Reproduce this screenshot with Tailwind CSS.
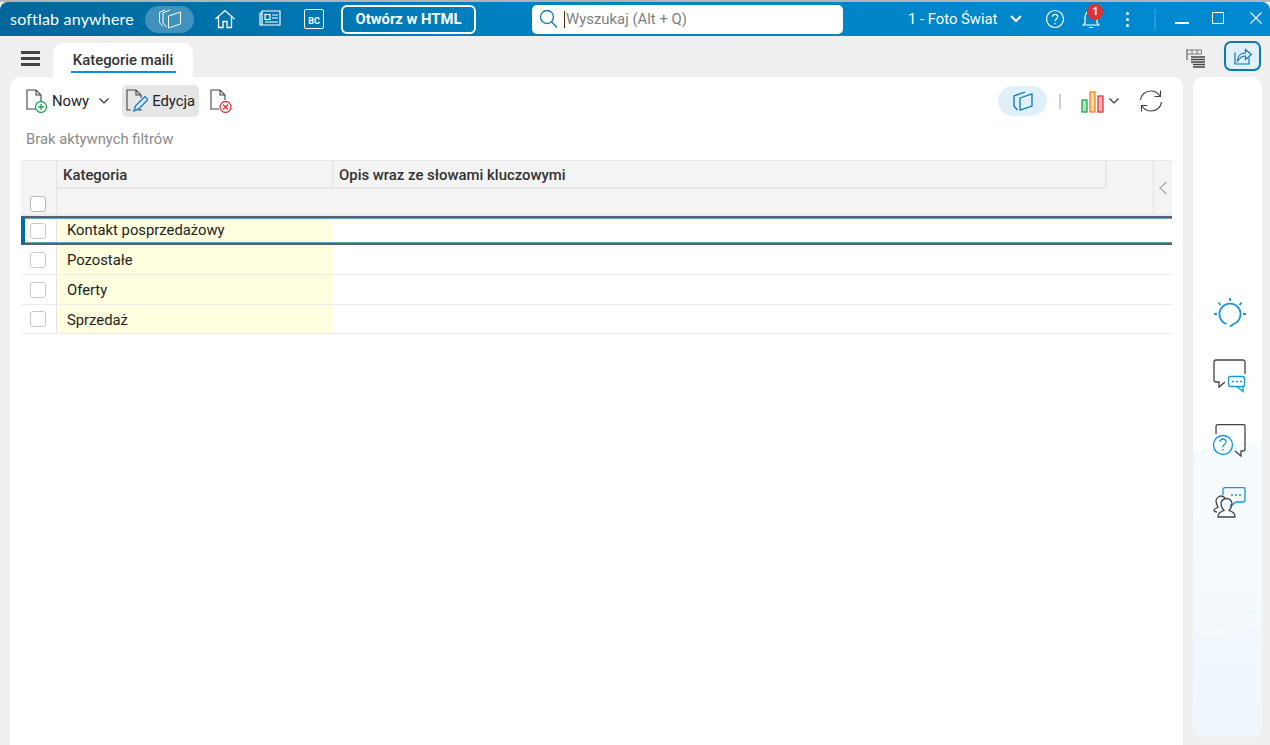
<!doctype html>
<html lang="pl"><head><meta charset="utf-8"><script src="https://cdn.jsdelivr.net/npm/@tailwindcss/browser@4"></script></head>
<body class="w-[1270px] h-[745px] overflow-hidden bg-[#efefef] font-[Roboto,sans-serif]">
<div class="flex flex-col h-[745px]">
  <div class="h-[2px] bg-[#b4b4b4]"></div>
  <header class="h-[34px] rounded-t-[8px] bg-gradient-to-r from-[#00669b] via-[#0080c0] via-40% to-[#008ad2] flex items-center text-white shrink-0">
    <span class="ml-[10px] w-[126px] text-[16px] leading-none font-[Lato,sans-serif] tracking-[0.2px] whitespace-nowrap">softlab anywhere</span>
    <div class="ml-[9px] w-[49px] h-[27px] rounded-full bg-white/25 flex items-center justify-center">
      <svg width="24" height="20" viewBox="0 0 24 20" fill="none" stroke="#fff" stroke-width="1"><path d="M7 1 1.500 3.500v10l3 3.500"/><path d="M12 1 5 4v10l3.500 4"/><path d="M10.500 7 22.500 3v12l-12 4z"/></svg>
    </div>
    <svg class="ml-[20px]" width="22" height="20" viewBox="0 0 22 20" fill="none" stroke="#fff" stroke-width="1.300"><path d="M1.500 10 11 1.500 20.500 10M4.500 8v10.500h4.500v-6h4v6h4.500V8"/></svg>
    <svg class="ml-[23px]" width="22" height="18" viewBox="0 0 22 18" fill="none" stroke="#fff" stroke-width="1.200"><path d="M1 3h2v12h18V1H3v2M3 15H1V3"/><rect x="6" y="4.500" width="5" height="5"/><path d="M13 5h6M13 8h6M6 12h13"/></svg>
    <div class="ml-[23px] w-[20px] h-[20px] border border-white rounded-[2px] flex items-end justify-center text-[9px] font-bold leading-[13px]">BC</div>
    <div class="ml-[17px] w-[135px] h-[29px] border-2 border-white rounded-[6px] flex items-center justify-center text-[14.8px] font-bold">Otwórz w HTML</div>
    <div class="ml-[56px] w-[311px] h-[29px] bg-white rounded-[5px] flex items-center text-[14.9px] text-[#808080]">
      <svg class="ml-[7px]" width="20" height="20" viewBox="0 0 20 20" fill="none" stroke="#0a78b4" stroke-width="1.300"><circle cx="8" cy="8" r="6.500"/><path d="m12.500 12.800 5.500 5.700"/></svg>
      <span class="ml-[5px] w-px h-[17px] bg-[#4a2a10]"></span><span class="ml-px">Wyszukaj (Alt + Q)</span>
    </div>
    <span class="ml-[65px] text-[14.8px] whitespace-nowrap">1 - Foto Świat</span>
    <svg class="ml-[13px]" width="12" height="8" viewBox="0 0 12 8" fill="none" stroke="#fff" stroke-width="2"><path d="m1 1 5 5 5-5"/></svg>
    <svg class="ml-[23px]" width="20" height="20" viewBox="0 0 20 20" fill="none" stroke="#fff" stroke-width="1.200"><circle cx="10" cy="10" r="8.500"/><path d="M7.500 7.800c0-3.300 5.200-3.300 5.200 0 0 2.200-2.700 2.200-2.700 4.500M10 14v1.200"/></svg>
    <div class="relative ml-[17px] w-[18px] h-[20px]">
      <svg width="18" height="20" viewBox="0 0 18 20" fill="none" stroke="#fff" stroke-width="1.200"><path d="M1 16h16l-2-2V8a6 6 0 0 0-12 0v6zM7 18.500h4"/></svg>
      <span class="absolute left-[5px] top-[-5px] w-[16px] h-[16px] rounded-full bg-[#dc3238] text-[11px] font-bold leading-[16px] text-center">1</span>
    </div>
    <div class="ml-[26px] w-[3px] flex flex-col gap-[3px]"><i class="size-[3px] bg-white rounded-full"></i><i class="size-[3px] bg-white rounded-full"></i><i class="size-[3px] bg-white rounded-full"></i></div>
    <span class="ml-[25px] w-[2px] h-[21px] bg-white/15"></span>
    <span class="ml-[19px] w-[14px] h-[2px] bg-white mt-[7px]"></span>
    <span class="ml-[23px] w-[12px] h-[12px] border border-white mb-[3px]"></span>
    <svg class="ml-[26px] mb-[3px]" width="12" height="12" viewBox="0 0 12 12" stroke="#fff" stroke-width="1.100"><path d="m.5.500 11 11M11.500.500l-11 11"/></svg>
  </header>
  <div class="h-[41px] shrink-0 flex items-end relative">
    <div class="ml-[21px] mb-[11px] w-[19px] flex flex-col gap-[3px]"><i class="h-[3px] bg-[#444]"></i><i class="h-[3px] bg-[#444]"></i><i class="h-[3px] bg-[#444]"></i></div>
    <div class="ml-[13px] w-[140px] h-[34px] bg-white rounded-t-[10px] flex flex-col items-center">
      <span class="text-[14.9px] font-medium text-[#333] mt-[8px] leading-[18px]">Kategorie maili</span>
      <span class="w-[105px] h-[2px] bg-[#0a8fdc] mt-[2px]"></span>
    </div>
    <svg class="absolute left-[1186px] top-[13px]" width="20" height="20" viewBox="0 0 20 20" fill="none" stroke="#444" stroke-width="1"><path d="M1 0v11"/><path d="M1.500 1h14v4H1.500M6 1v4M11 1v4" stroke="#777"/><path d="M5 8h14M5 10.500h14M5 13h14M7 15.500h12M7 18h12" stroke-width="1.300"/></svg>
    <div class="absolute left-[1224px] top-[5px] w-[37px] h-[30px] bg-[#e0f0fa] border-2 border-[#0a78b4] rounded-[7px] flex items-center justify-center">
      <svg width="20" height="20" viewBox="0 0 20 20" fill="none" stroke="#0a78b4" stroke-width="1.200"><path d="M2 6.500V18h14v-6"/><path d="M4.500 15c0-5 3-8 8-8V3.500l6 5-6 5V10c-4 0-6 2-8 5z"/></svg>
    </div>
  </div>
  <div class="flex-1 flex min-h-0">
    <main class="ml-[10px] w-[1173px] bg-white rounded-t-[10px] px-[11px] flex flex-col">
      <div class="h-[48px] shrink-0 flex items-center text-[14.8px] text-[#222]">
        <svg class="ml-[5px]" width="22" height="24" viewBox="0 0 22 24" fill="none" stroke="#444" stroke-width="1.100"><path d="M10 20H1V1h9l5 5v6M10 1v5h5"/><circle cx="15" cy="18" r="5.500" stroke="#18a84c" stroke-width="1.300"/><path d="M15 15v6M12 18h6" stroke="#18a84c" stroke-width="1.300"/></svg>
        <span class="ml-[4px]">Nowy</span>
        <svg class="ml-[10px]" width="10" height="6" viewBox="0 0 10 6" fill="none" stroke="#333" stroke-width="1.200"><path d="m.5.500 4.500 4.500L9.500.500"/></svg>
        <div class="ml-[13px] w-[77px] h-[32px] bg-[#e6e6e6] rounded-[5px] flex items-center">
          <svg class="ml-[4px]" width="22" height="24" viewBox="0 0 22 24" fill="none" stroke="#444" stroke-width="1.100"><path d="M5 21H1V1h9l5 5v3M10 1v5h5M15 20v1h-3"/><path d="M8 22l1.500-5L19 7.500l3 3L12.500 20z" stroke="#2288dd" stroke-width="1.500"/></svg>
          <span class="ml-[4px]">Edycja</span>
        </div>
        <svg class="ml-[11px]" width="22" height="24" viewBox="0 0 22 24" fill="none" stroke="#444" stroke-width="1.100"><path d="M9 20H1V1h9l5 5v5M10 1v5h5"/><circle cx="15.500" cy="18" r="5.500" stroke="#e8323c" stroke-width="1.300"/><path d="m13 15.500 5 5M18 15.500l-5 5" stroke="#e8323c" stroke-width="1.300"/></svg>
        <div class="ml-auto w-[49px] h-[30px] bg-[#e0f0fa] rounded-full flex items-center justify-center">
          <svg width="22" height="22" viewBox="0 0 22 22" fill="none" stroke="#0a78b4" stroke-width="1.300"><path d="M13 2 2 6v10l3.500 4"/><path d="M8 8l12-4v12L8 20z"/></svg>
        </div>
        <span class="ml-[12px] w-[2px] h-[15px] bg-[#d0d0d0]"></span>
        <svg class="ml-[20px]" width="23" height="23" viewBox="0 0 23 23" stroke-width="1.300"><rect x="1" y="10" width="5" height="12" fill="#b4e6c4" stroke="#18a84c"/><rect x="9" y="2" width="5" height="20" fill="#fcd9a4" stroke="#f08020"/><rect x="17" y="6" width="5" height="16" fill="#fcb4b4" stroke="#e8323c"/></svg>
        <svg class="ml-[5px]" width="10" height="6" viewBox="0 0 10 6" fill="none" stroke="#333" stroke-width="1.200"><path d="m.5.500 4.500 4.500L9.500.500"/></svg>
        <svg class="ml-[20px] mr-[9px]" width="24" height="24" viewBox="0 0 24 24" fill="none" stroke="#444" stroke-width="1.200"><path d="M1.500 11C2 5.500 6.500 2 12 2c4 0 7 2 9 5M21.500 1.500V7.500h-6M22.500 13c-.5 5.500-5 9-10.500 9-4 0-7-2-9-5M2.500 22.500V16.500h6"/></svg>
      </div>
      <div class="h-[35px] shrink-0 text-[14.8px] text-[#8a8a8a] leading-[28px] pl-[5px]">Brak aktywnych filtrów</div>
      <section class="text-[14.8px] text-[#222]">
        <div class="h-[56px] bg-[#f4f4f4] border-t border-b-2 border-t-[#e6e6e6] border-b-[#ebebeb] grid grid-cols-[36px_277px_773px_1fr_18px] grid-rows-[28px_1fr]">
          <div class="row-span-2 border-r border-[#e4e4e4] relative">
            <span class="absolute left-[9px] top-[35px] size-[16px] bg-white border border-[#b8b8b8] rounded-[3px]"></span>
          </div>
          <div class="border-r-2 border-b-2 border-[#e8e8e8] pl-[6px] leading-[28px] text-[14.9px] font-medium text-[#333]">Kategoria</div>
          <div class="border-r-2 border-b-2 border-[#e8e8e8] pl-[5px] leading-[28px] text-[14.9px] font-medium text-[#333]">Opis wraz ze słowami kluczowymi</div>
          <div class="row-span-2 border-r border-[#e4e4e4]"></div>
          <div class="row-span-2 flex items-center justify-center"><svg width="8" height="14" viewBox="0 0 8 14" fill="none" stroke="#aaa" stroke-width="1.300"><path d="M7.500 1 1 7l6.500 6"/></svg></div>
          <div class="col-start-2 col-span-2"></div>
        </div>
        <div class="h-[29px] border-y-2 border-[#5c6064] border-l-[4px] border-l-[#006ea8] grid grid-cols-[32px_276px_1fr] shadow-[inset_0_1px_0_#6f9fb8,inset_0_-1px_0_#6f9fb8]">
          <div class="my-px border-r border-[#e4e4e4] flex items-center"><span class="ml-[5px] size-[16px] border border-[#c8c8c8] rounded-[3px]"></span></div>
          <div class="my-px bg-[#ffffe0] pl-[10px] leading-[23px]">Kontakt posprzedażowy</div><div></div>
        </div>
        <div class="h-[30px] border-b border-[#ececec] grid grid-cols-[36px_276px_1fr]">
          <div class="border-r border-[#e4e4e4] flex items-center"><span class="ml-[9px] size-[16px] border border-[#c8c8c8] rounded-[3px]"></span></div>
          <div class="bg-[#ffffe0] pl-[10px] pt-px leading-[28px]">Pozostałe</div><div></div>
        </div>
        <div class="h-[30px] border-b border-[#ececec] grid grid-cols-[36px_276px_1fr]">
          <div class="border-r border-[#e4e4e4] flex items-center"><span class="ml-[9px] size-[16px] border border-[#c8c8c8] rounded-[3px]"></span></div>
          <div class="bg-[#ffffe0] pl-[10px] pt-px leading-[28px]">Oferty</div><div></div>
        </div>
        <div class="h-[29px] border-b border-[#ececec] grid grid-cols-[36px_276px_1fr]">
          <div class="border-r border-[#e4e4e4] flex items-center"><span class="ml-[9px] size-[16px] border border-[#c8c8c8] rounded-[3px]"></span></div>
          <div class="bg-[#ffffe0] pl-[10px] pt-[2px] leading-[26px]">Sprzedaż</div><div></div>
        </div>
      </section>
    </main>
    <aside class="ml-[10px] w-[69px] h-[660px] bg-white rounded-[10px] relative overflow-hidden flex flex-col items-start pl-[20px]">
      <svg class="absolute inset-0" width="69" height="660" viewBox="0 0 69 660">
        <defs><linearGradient id="g" x1="0" y1="0" x2="0" y2="1"><stop offset="0" stop-color="#f6fbfe"/><stop offset="1" stop-color="#eef6fc"/></linearGradient></defs>
        <path d="M0 375Q30 366 69 366V660H0z" fill="url(#g)"/>
        <path d="M0 380Q30 368 60 366" fill="none" stroke="#d8ecf8" stroke-dasharray="4 6"/>
        <path d="M2 559Q35 546 69 530" fill="none" stroke="#cfe6f6" stroke-dasharray="6 6"/>
        <path d="M0 385Q35 410 69 450V550Q30 560 0 560z" fill="#fff" fill-opacity=".2"/>
      </svg>
      <svg class="relative mt-[219px]" width="34" height="34" viewBox="0 0 34 34" fill="none" stroke="#1796dc" stroke-width="1.800"><path d="M13.500 28A10.500 10.500 0 1 1 20.500 28L17 30.500"/><path d="M17 2v3M5.500 6.500l2 2.500M28.500 6.500l-2 2.500M1 18h3M30 18h3"/></svg>
      <svg class="relative mt-[29px]" width="34" height="34" viewBox="0 0 34 34" fill="none" stroke-width="1.300"><path d="M32 15V3a2 2 0 0 0-2-2H3a2 2 0 0 0-2 2v18a2 2 0 0 0 2 2h3v5l6-5" stroke="#444"/><rect x="15.500" y="17.500" width="16" height="10" rx="2" stroke="#1796dc"/><path d="M24 27.500l6 5v-5M19 22.500h2M23 22.500h2M27 22.500h2" stroke="#1796dc"/></svg>
      <svg class="relative mt-[31px]" width="34" height="34" viewBox="0 0 34 34" fill="none" stroke-width="1.300"><path d="M3 10V2.500a2 2 0 0 1 2-2h25a2 2 0 0 1 2 2V25a2 2 0 0 1-2 2h-2v5l-6-5" stroke="#444"/><circle cx="10" cy="21" r="9.500" stroke="#1796dc"/><path d="M7 18c0-4 6-4 6 0 0 2-3 2-3 5M10 25v1.500" stroke="#1796dc"/></svg>
      <svg class="relative mt-[29px]" width="34" height="34" viewBox="0 0 34 34" fill="none" stroke-width="1.300"><path d="M10 8V2.500a2 2 0 0 1 2-2h18a2 2 0 0 1 2 2V13a2 2 0 0 1-2 2h-7l-5 4v-2" stroke="#1796dc"/><path d="M18 8h2M22 8h2M26 8h2" stroke="#1796dc"/><path d="M5 30c0-4 2-5 6-6.500-3-3-3-6-3-7 0-3 3-5 5.500-5s5.500 2 5.500 5c0 2-1 5-3 7 4 1.500 6 2.500 6 6.500zM4 25c-2 0-3-1-3-2 0-1 3-2 4-3-1-2-2-4-2-6 0-3 3-5 5-5 2 0 3 1 4 2" stroke="#444"/></svg>
    </aside>
  </div>
</div>
</body></html>
